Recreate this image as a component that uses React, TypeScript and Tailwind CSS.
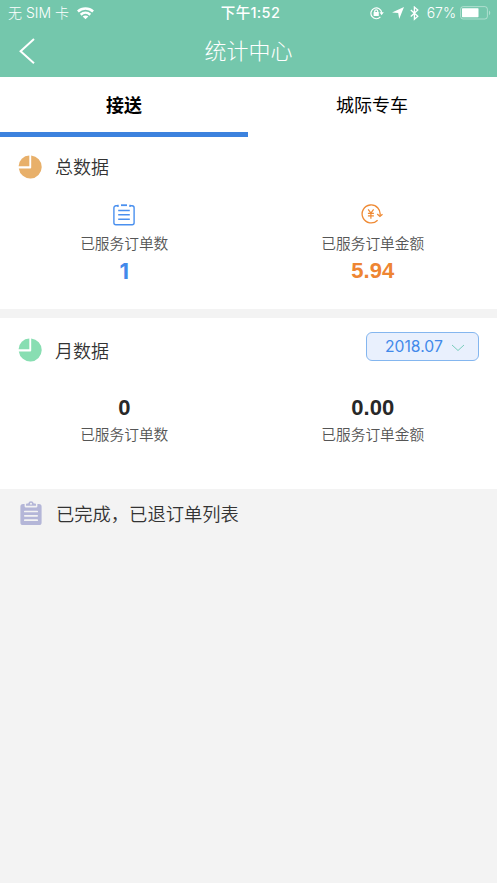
import { ReactNode } from "react";

interface StatProps {
  label: string;
  value: string;
  valueClass: string;
  icon?: ReactNode;
}

const WifiIcon = () => (
  <svg width="17" height="13" viewBox="0 0 17 13" fill="none" stroke="white" strokeWidth="2.5">
    <path d="M.9 4.5C5.2.5 11.8.5 16.1 4.5" />
    <path d="M3.7 7.7c2.8-2.5 6.8-2.5 9.6 0" />
    <path d="M8.5 12.3 5.7 9.5c1.6-1.4 4-1.4 5.6 0Z" fill="white" stroke="none" />
  </svg>
);

const RotationLockIcon = () => (
  <svg width="14" height="13" viewBox="0 0 14 13" fill="none" stroke="white" strokeWidth="1.2">
    <path d="M10.4 9.9A5.4 5.4 0 1 1 11.7 5.7" />
    <path d="m9.5 5.3 2.1 2.9 2.2-2.9Z" fill="white" stroke="none" />
    <rect x="3.6" y="5.1" width="5.2" height="3.8" rx=".5" fill="white" stroke="none" />
    <path d="M4.7 5.6V4.3a1.5 1.5 0 0 1 3 0v1.3" />
  </svg>
);

const LocationIcon = () => (
  <svg width="12" height="12" viewBox="0 0 12 12" fill="white">
    <path d="M12 0 7.2 12 6.2 6.1 0 5.5Z" />
  </svg>
);

const BluetoothIcon = () => (
  <svg width="9" height="15" viewBox="0 0 9 15" fill="none" stroke="white" strokeWidth="1.3">
    <path d="m.8 3.9 7 6.4-3.4 3V1.1l3.4 3-7 6.4" />
  </svg>
);

const BatteryIcon = () => (
  <svg width="31" height="14" viewBox="0 0 31 14">
    <rect x=".6" y=".6" width="26.8" height="12.4" rx="2.6" fill="none" stroke="white" strokeOpacity=".42" />
    <rect x="2" y="2.2" width="16.5" height="9" rx=".6" fill="white" />
    <path d="M29 4.6c1.7.8 1.7 3.8 0 4.6Z" fill="white" fillOpacity=".42" />
  </svg>
);

const PieIcon = ({ color }: { color: string }) => (
  <svg width="24" height="24" viewBox="0 0 24 24" fill={color}>
    <path d="M13.2.5A11.5 11.5 0 1 1 .8 13.4h11.4a1 1 0 0 0 1-1Z" />
    <path d="M11.3.4v10.8H.6A11 11 0 0 1 11.3.4Z" />
  </svg>
);

const OrderIcon = () => (
  <svg width="22" height="22" viewBox="0 0 22 22" fill="none" stroke="#4a90ef" strokeWidth="1.4">
    <path d="M4.6 1.8H2.9A2 2 0 0 0 .9 3.8v15a2 2 0 0 0 2 2h16.2a2 2 0 0 0 2-2v-15a2 2 0 0 0-2-2h-1.7M5 3V.8M17 3V.8" />
    <path d="M8 1.2h6" strokeWidth="1.8" />
    <path d="M5.2 6.5h11.6M5.2 10.8h11.6M5.2 15.2h11.6" strokeWidth="1.6" />
  </svg>
);

const AmountIcon = () => (
  <svg className="relative right-px" width="22" height="20" viewBox="0 0 22 20" fill="none" stroke="#ef8a34" strokeWidth="1.3">
    <path d="M16.6 16.2A9 9 0 1 1 18.9 12" />
    <path d="m16.2 10 2.7 2.4 2.6-2.2" />
    <path d="M7.2 5.4l2.7 3.8 2.7-3.8M6.9 9.3h6M6.9 11.9h6M9.9 9.2v5.5" strokeWidth="1.2" />
  </svg>
);

const ListIcon = () => (
  <svg width="22" height="25" viewBox="0 0 22 25">
    <path
      d="M3 3h1.6v2.2a1.4 1.4 0 0 0 1.4 1.4h10a1.4 1.4 0 0 0 1.4-1.4V3H19a2.6 2.6 0 0 1 2.6 2.6v15.8A2.6 2.6 0 0 1 19 24H3a2.6 2.6 0 0 1-2.6-2.6V5.600A2.600 2.600 0 0 1 3 3Z"
      fill="#b4b6d8"
    />
    <path d="M7 2.500h1.200a2.900 2.900 0 0 1 5.600 0H15a1 1 0 0 1 1 1v1.200H6V3.500a1 1 0 0 1 1-1Z" fill="#b4b6d8" />
    <circle cx="11" cy="2.800" r="1" fill="#f3f3f3" />
    <path d="M4.800 10.500h12.400M4.800 14.800h12.400M4.800 19.200h12.400" stroke="#f3f3f3" strokeWidth="1.700" strokeLinecap="round" />
  </svg>
);

const Stat = ({ label, value, valueClass, icon }: StatProps) => {
  const number = <span className={`text-[22px] leading-7 font-bold ${valueClass}`}>{value}</span>;

  return (
    <div className="flex flex-1 flex-col items-center">
      {icon && <div className="flex h-[27px] items-start justify-center">{icon}</div>}
      {!icon && number}
      <span className="text-[14.7px] leading-[26px] font-[350] text-[#555]">{label}</span>
      {icon && number}
    </div>
  );
};

const App = () => {
  return (
    <div className="flex min-h-screen flex-col bg-[#f3f3f3] font-['Inter','Noto_Sans_CJK_SC',sans-serif]">
      <header className="h-[77px] bg-[#74c7ac] text-white">
        <div className="grid h-[26px] grid-cols-[1fr_80px_1fr] items-center pr-1.5 pl-2 text-[14px] leading-none">
          <div className="flex items-center gap-2">
            <span className="font-light whitespace-nowrap">无 SIM 卡</span>
            <WifiIcon />
          </div>
          <span className="pl-0.5 text-center text-[14.5px] font-medium tracking-[.35px] whitespace-nowrap">
            下午1:52
          </span>
          <div className="flex items-center justify-end">
            <RotationLockIcon />
            <span className="ml-2"><LocationIcon /></span>
            <span className="ml-1.5"><BluetoothIcon /></span>
            <span className="ml-2 font-light">67%</span>
            <span className="ml-1"><BatteryIcon /></span>
          </div>
        </div>
        <div className="grid h-[49px] grid-cols-[60px_1fr_60px] items-center">
          <svg className="ml-[19px]" width="17" height="28" viewBox="0 0 17 28" fill="none" stroke="white" strokeWidth="2">
            <path d="M15 2 1.600 14.300l13.400 12" />
          </svg>
          <h1 className="text-center text-[22px] leading-8 font-light">统计中心</h1>
        </div>
      </header>

      <nav className="flex h-[60px] bg-white text-[18px] text-black">
        <div className="flex flex-1 justify-center border-b-[5px] border-[#3c82de] pt-[15px] leading-7 font-bold">
          接送
        </div>
        <div className="flex flex-1 justify-center pt-[15px] pr-px leading-7">城际专车</div>
      </nav>

      <section className="h-[172px] bg-white pt-[18px]">
        <div className="flex h-6 items-center gap-[13px] pl-[18px]">
          <PieIcon color="#e8b06a" />
          <h2 className="pt-0.5 text-[18px] leading-6 font-[350] text-[#333]">总数据</h2>
        </div>
        <div className="flex pt-[25px]">
          <Stat label="已服务订单数" value="1" valueClass="font-['Inter'] text-[#4289ea]" icon={<OrderIcon />} />
          <Stat
            label="已服务订单金额"
            value="5.94"
            valueClass="font-['Liberation_Sans'] text-[#ee8532]"
            icon={<AmountIcon />}
          />
        </div>
      </section>

      <section className="mt-[9px] h-[171px] bg-white pt-3.5">
        <div className="flex h-9 items-center pr-[18px] pl-[18px]">
          <PieIcon color="#88deb2" />
          <h2 className="ml-[13px] pt-1 text-[18px] leading-6 font-[350] text-[#333]">月数据</h2>
          <button className="mb-[7px] ml-auto flex h-[29px] w-[113px] items-center rounded-md border border-[#84b6ef] bg-[#e9f0fd] pl-[18px] text-[15.7px] text-[#4289ea]">
            2018.07
            <svg className="mt-0.5 ml-2" width="14" height="8" viewBox="0 0 14 8" fill="none" stroke="#78cdbc">
              <path d="m1 1 6 5.5L13 1" />
            </svg>
          </button>
        </div>
        <div className="flex pt-[26px]">
          <Stat label="已服务订单数" value="0" valueClass="font-['Liberation_Sans'] text-[#282828]" />
          <Stat label="已服务订单金额" value="0.00" valueClass="font-['Liberation_Sans'] text-[#282828]" />
        </div>
      </section>

      <div className="flex h-[49px] items-center gap-3.5 pl-5">
        <ListIcon />
        <span className="text-[18.3px] leading-6 font-[350] text-[#333]">已完成，已退订单列表</span>
      </div>
    </div>
  );
};

export default App;
